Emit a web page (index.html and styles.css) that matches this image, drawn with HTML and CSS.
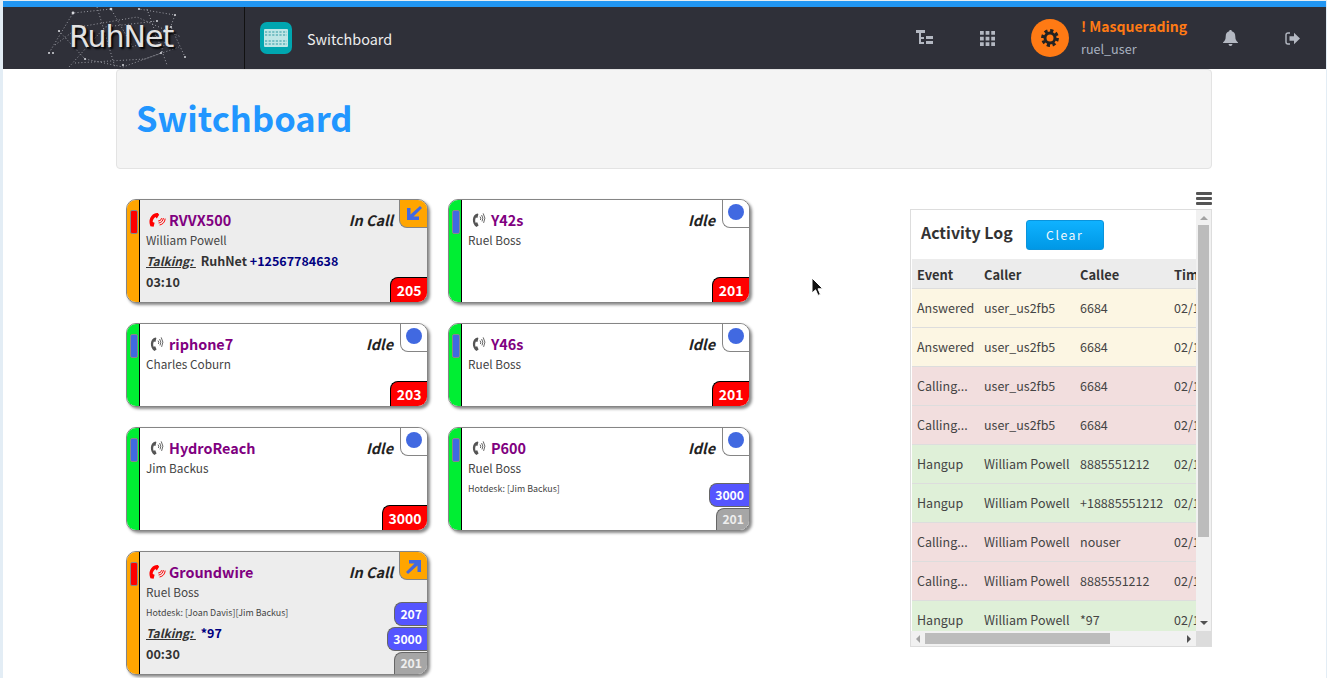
FILE: index.html
```html
<!DOCTYPE html>
<html lang="en">
<head>
  <meta charset="UTF-8" />
  <meta name="viewport" content="width=device-width, initial-scale=1.0"/>
  <title>Switchboard</title>
  <link rel="stylesheet" href="styles.css">
</head>
<body>
  <svg class="defs" width="0" height="0">
    <symbol id="phone" viewBox="0 0 16 16">
      <path d="M6.4 1.4 C1 2.4 .2 11.4 5.4 15 L7.6 13.6 L6.2 10.2 L4.6 10.8 C3.9 9 4.1 7.4 4.9 5.6 L6.4 6.1 L7.4 2 Z"/>
      <path d="M9 4.6 Q10.4 6.2 9.4 8 M10.6 3 Q12.9 6.2 11 9.4 M12.2 1.4 Q15.4 6.2 12.6 10.9" fill="none" stroke="currentColor" stroke-width=".9"/>
    </symbol>
    <symbol id="phone-call" viewBox="0 0 18 16">
      <path d="M9.8 1 C4.2 .4 -.6 7.6 2.4 14.2 L5.6 14.8 L6.6 10.8 L4.7 10 C4.7 8 5.8 6 7.4 5 L8.8 6.4 L11.2 2.8 Z"/>
      <path d="M10.2 9 Q13 9.2 13.6 6.2 M10.6 11 Q14.6 10.6 15.4 6 M11.6 13 Q16.6 12 17.2 6.6" fill="none" stroke="currentColor" stroke-width="1"/>
    </symbol>
  </svg>

  <header class="topbar">
    <div class="logo">
      <svg class="logo-net" width="150" height="62" viewBox="0 0 150 62">
        <g fill="none" stroke="#9a9ba3" stroke-width="1" stroke-dasharray="1 2.2">
          <path d="M4 46 L28 6 L66 2 L88 40 L126 20 L140 50"/>
          <path d="M14 24 L40 52 L78 60 L116 46 L130 8 L94 2"/>
          <path d="M52 0 L70 60 M102 2 L122 58 M24 60 L60 20 L112 14"/>
          <path d="M10 38 L34 20 L92 10 L136 30 M30 56 L100 52 L134 40"/>
        </g>
        <g fill="#d6d7dc">
          <circle cx="28" cy="6" r="1.4"/><circle cx="66" cy="2" r="1.3"/><circle cx="94" cy="2" r="1.1"/>
          <circle cx="126" cy="20" r="1.1"/><circle cx="14" cy="24" r="1.1"/><circle cx="4" cy="46" r="1"/>
          <circle cx="8" cy="46" r="1"/><circle cx="140" cy="50" r="1"/><circle cx="116" cy="46" r="1"/>
          <circle cx="34" cy="20" r="1.1"/><circle cx="112" cy="14" r="1"/><circle cx="40" cy="52" r="1"/>
          <circle cx="78" cy="58" r="1"/><circle cx="130" cy="8" r="1"/>
        </g>
      </svg>
      <span class="logo-text">RuhNet</span>
    </div>
    <div class="app-title">
      <span class="app-icon">
        <svg width="24" height="18" viewBox="0 0 24 18">
          <rect width="24" height="18" rx="1" fill="#bfe6e6"/>
          <g fill="none" stroke="#2f98a2" stroke-width="1.1" stroke-dasharray="2.2 1.4">
            <path d="M1 3H23M1 6H23M1 12H23M1 15H23"/>
          </g>
        </svg>
      </span>
      <span>Switchboard</span>
    </div>
    <nav class="top-right">
      <svg class="nav-icon tree" width="17" height="16" viewBox="0 0 17 16">
        <path d="M0 0H9V3H0ZM3 3H5V14H3ZM3 7H8V9H3ZM3 12H8V14H3ZM10 6H17V9H10ZM10 11H17V14H10Z"/>
      </svg>
      <svg class="nav-icon grid" width="15" height="15" viewBox="0 0 16 16">
        <path d="M0 0H4V4H0ZM6 0H10V4H6ZM12 0H16V4H12ZM0 6H4V10H0ZM6 6H10V10H6ZM12 6H16V10H12ZM0 12H4V16H0ZM6 12H10V16H6ZM12 12H16V16H12Z"/>
      </svg>
      <span class="avatar">
        <svg width="18" height="18" viewBox="0 0 18 18">
          <circle cx="9" cy="9" r="5" fill="none" stroke="#222" stroke-width="3"/>
          <circle cx="9" cy="9" r="7.4" fill="none" stroke="#222" stroke-width="3" stroke-dasharray="3.2 2.6"/>
        </svg>
      </span>
      <div class="who">
        <div class="who-alert">! Masquerading</div>
        <div class="who-name">ruel_user</div>
      </div>
      <svg class="nav-icon bell" width="15" height="16" viewBox="0 0 15 16">
        <path d="M7.5 0C8.3 0 8.8.5 8.8 1.2 11.2 1.8 12.3 3.8 12.3 6.4 12.3 9.6 13.2 10.8 15 12.4V13H0V12.4C1.8 10.8 2.7 9.6 2.7 6.4 2.7 3.8 3.8 1.8 6.2 1.2 6.2.5 6.7 0 7.5 0ZM5.6 14H9.4C9.4 15.2 8.6 16 7.5 16S5.6 15.2 5.6 14Z"/>
      </svg>
      <svg class="nav-icon signout" width="15" height="13" viewBox="0 0 15 13">
        <path d="M5 1H3C1.8 1 1 1.8 1 3V10C1 11.2 1.8 12 3 12H5" fill="none" stroke="currentColor" stroke-width="1.4"/>
        <path d="M4.5 4.2H9V.8L15 6.5 9 12.2V8.8H4.5Z"/>
      </svg>
    </nav>
  </header>

  <main class="page">
    <div class="page-head">
      <h1>Switchboard</h1>
    </div>

    <div class="board">
      <section class="cards">
        <article class="card in-call">
          <span class="strip"><i class="led red"></i></span>
          <span class="corner">
            <svg width="16" height="16" viewBox="0 0 16 16"><path d="M14 0 L16 2 L7.5 10.5 L13 10.5 L13 14 L1 14 L1 2 L4.5 2 L4.5 8.5Z"/></svg>
          </span>
          <div class="card-top">
            <svg class="ph ph-call" width="18" height="16"><use href="#phone-call"/></svg>
            <span class="dev-name">RVVX500</span>
            <span class="state">In Call</span>
          </div>
          <div class="user">William Powell</div>
          <div class="talk"><u>Talking:&nbsp;</u> <span class="peer">RuhNet</span> <span class="num">+12567784638</span></div>
          <div class="dur">03:10</div>
          <div class="badges"><span class="badge own">205</span></div>
        </article>

        <article class="card idle">
          <span class="strip"><i class="led blue"></i></span>
          <span class="corner"><i class="dot"></i></span>
          <div class="card-top">
            <svg class="ph" width="16" height="16"><use href="#phone"/></svg>
            <span class="dev-name">Y42s</span>
            <span class="state">Idle</span>
          </div>
          <div class="user">Ruel Boss</div>
          <div class="badges"><span class="badge own">201</span></div>
        </article>

        <article class="card idle">
          <span class="strip"><i class="led blue"></i></span>
          <span class="corner"><i class="dot"></i></span>
          <div class="card-top">
            <svg class="ph" width="16" height="16"><use href="#phone"/></svg>
            <span class="dev-name">riphone7</span>
            <span class="state">Idle</span>
          </div>
          <div class="user">Charles Coburn</div>
          <div class="badges"><span class="badge own">203</span></div>
        </article>

        <article class="card idle">
          <span class="strip"><i class="led blue"></i></span>
          <span class="corner"><i class="dot"></i></span>
          <div class="card-top">
            <svg class="ph" width="16" height="16"><use href="#phone"/></svg>
            <span class="dev-name">Y46s</span>
            <span class="state">Idle</span>
          </div>
          <div class="user">Ruel Boss</div>
          <div class="badges"><span class="badge own">201</span></div>
        </article>

        <article class="card idle">
          <span class="strip"><i class="led blue"></i></span>
          <span class="corner"><i class="dot"></i></span>
          <div class="card-top">
            <svg class="ph" width="16" height="16"><use href="#phone"/></svg>
            <span class="dev-name">HydroReach</span>
            <span class="state">Idle</span>
          </div>
          <div class="user">Jim Backus</div>
          <div class="badges"><span class="badge own">3000</span></div>
        </article>

        <article class="card idle tall">
          <span class="strip"><i class="led blue"></i></span>
          <span class="corner"><i class="dot"></i></span>
          <div class="card-top">
            <svg class="ph" width="16" height="16"><use href="#phone"/></svg>
            <span class="dev-name">P600</span>
            <span class="state">Idle</span>
          </div>
          <div class="user">Ruel Boss</div>
          <div class="hotdesk">Hotdesk: [Jim Backus]</div>
          <div class="badges">
            <span class="badge other">3000</span>
            <span class="badge off">201</span>
          </div>
        </article>

        <article class="card in-call">
          <span class="strip"><i class="led red"></i></span>
          <span class="corner">
            <svg width="16" height="16" viewBox="0 0 16 16"><path d="M2 16 L0 14 L8.5 5.5 L3 5.5 L3 2 L15 2 L15 14 L11.5 14 L11.5 7.5Z"/></svg>
          </span>
          <div class="card-top">
            <svg class="ph ph-call" width="18" height="16"><use href="#phone-call"/></svg>
            <span class="dev-name">Groundwire</span>
            <span class="state">In Call</span>
          </div>
          <div class="user">Ruel Boss</div>
          <div class="hotdesk">Hotdesk: [Joan Davis][Jim Backus]</div>
          <div class="talk"><u>Talking:&nbsp;</u> <span class="num">*97</span></div>
          <div class="dur">00:30</div>
          <div class="badges">
            <span class="badge other">207</span>
            <span class="badge other">3000</span>
            <span class="badge off">201</span>
          </div>
        </article>
      </section>

      <aside class="log-col">
        <div class="bars"><i></i><i></i><i></i></div>
        <div class="log">
          <div class="log-view">
            <div class="log-head">
              <h3>Activity Log</h3>
              <button class="clear">Clear</button>
            </div>
            <table>
              <thead>
                <tr><th>Event</th><th>Caller</th><th>Callee</th><th>Time</th></tr>
              </thead>
              <tbody>
                <tr class="ans"><td>Answered</td><td>user_us2fb5</td><td>6684</td><td>02/1</td></tr>
                <tr class="ans"><td>Answered</td><td>user_us2fb5</td><td>6684</td><td>02/1</td></tr>
                <tr class="calling"><td>Calling...</td><td>user_us2fb5</td><td>6684</td><td>02/1</td></tr>
                <tr class="calling"><td>Calling...</td><td>user_us2fb5</td><td>6684</td><td>02/1</td></tr>
                <tr class="hang"><td>Hangup</td><td>William Powell</td><td>8885551212</td><td>02/1</td></tr>
                <tr class="hang"><td>Hangup</td><td>William Powell</td><td>+18885551212</td><td>02/1</td></tr>
                <tr class="calling"><td>Calling...</td><td>William Powell</td><td>nouser</td><td>02/1</td></tr>
                <tr class="calling"><td>Calling...</td><td>William Powell</td><td>8885551212</td><td>02/1</td></tr>
                <tr class="hang"><td>Hangup</td><td>William Powell</td><td>*97</td><td>02/1</td></tr>
              </tbody>
            </table>
          </div>
          <div class="vbar">
            <i class="arrow up"></i>
            <div class="vtrack"><div class="vthumb"></div></div>
            <i class="arrow down"></i>
          </div>
          <div class="hbar">
            <i class="arrow left"></i>
            <div class="htrack"><div class="hthumb"></div></div>
            <i class="arrow right"></i>
          </div>
          <div class="sb-corner"></div>
        </div>
      </aside>
    </div>
  </main>

  <svg class="cursor" width="13" height="20" viewBox="0 0 13 20">
    <path d="M1 1V16L4.6 12.8 7 18.4 9.4 17.4 7 11.8H11.8Z" fill="#111" stroke="#fff" stroke-width="1"/>
  </svg>
</body>
</html>
```

FILE: styles.css
```css
* {
  box-sizing: border-box;
}

body {
  font-family: "Noto Sans CJK SC", "Open Sans", sans-serif;
  margin: 0;
  padding: 1px 1px 0 3px;
  height: 678px;
  overflow: hidden;
  background: linear-gradient(#fff, #fff) 3px 1px / calc(100% - 4px) 100% no-repeat, #e3edf5;
  color: #333;
  position: relative;
}

.defs {
  position: absolute;
}

/* top bar */
.topbar {
  display: flex;
  align-items: stretch;
  height: 68px;
  background: #2f3039;
  border-top: 6px solid #2196f3;
  color: #eee;
}

.logo {
  width: 242px;
  border-right: 1px solid #111;
  position: relative;
}

.logo-net {
  position: absolute;
  left: 42px;
  top: 0;
}

.logo-text {
  position: absolute;
  left: 66px;
  top: 5px;
  font-family: "DejaVu Sans", sans-serif;
  font-size: 30px;
  line-height: 50px;
  letter-spacing: -1px;
  color: #e2e2e2;
  text-shadow: 2px 2px 2px #000;
}

.app-title {
  display: flex;
  align-items: center;
  gap: 15px;
  padding-left: 15px;
  font-size: 14.4px;
}

.app-icon {
  width: 32px;
  height: 32px;
  border-radius: 7px;
  background: #00a6b0;
  display: flex;
  align-items: center;
  justify-content: center;
}

.app-icon svg {
  display: block;
}

.top-right {
  margin-left: auto;
  display: flex;
  align-items: center;
  color: #b4b8c2;
  padding-right: 26px;
}

.nav-icon {
  fill: #b4b8c2;
  display: block;
}

.tree { margin-right: 47px; }
.grid { margin-right: 36px; }

.avatar {
  width: 38px;
  height: 38px;
  border-radius: 50%;
  background: #ff7a14;
  display: flex;
  align-items: center;
  justify-content: center;
  margin-right: 12px;
}

.who {
  width: 142px;
}

.who-alert {
  color: #ff7a14;
  font-size: 14px;
  font-weight: 700;
  line-height: 22px;
  margin-top: -2px;
}

.who-name {
  color: #a9b2c0;
  font-size: 12.6px;
  line-height: 22px;
  margin-top: 1px;
}

.bell { margin-right: 47px; }

/* page */
.page {
  width: 1096px;
  margin-left: 113px;
}

.page-head {
  height: 100px;
  background: #f4f4f4;
  border: 1px solid #e3e3e3;
  border-radius: 4px;
  display: flex;
  align-items: center;
  padding: 0 0 4px 19px;
}

h1 {
  margin: 0;
  font-size: 34.5px;
  line-height: 44px;
  font-weight: 700;
  color: #2196ff;
}

.board {
  display: flex;
  justify-content: space-between;
  padding-left: 10px;
}

/* cards */
.cards {
  display: grid;
  grid-template-columns: 302px 302px;
  gap: 20px;
  align-items: stretch;
  align-content: start;
  padding-top: 30px;
}

.card {
  position: relative;
  min-height: 84px;
  border: 1px solid #858585;
  border-radius: 10px;
  box-shadow: 2px 2px 3px #8a8a8a;
  padding: 10px 34px 0 19px;
  background: #fff;
  overflow: hidden;
}

.card.in-call {
  background: #ededed;
  padding-bottom: 10px;
}

.card.tall {
  min-height: 104px;
}

.strip {
  position: absolute;
  left: 0;
  top: 0;
  bottom: 0;
  width: 13px;
  border-right: 1px solid #000;
}

.in-call .strip { background: #ffa500; }
.idle .strip { background: #00ee33; }

.led {
  position: absolute;
  left: 3px;
  top: 10px;
  width: 8px;
  height: 24px;
  border: 1px solid #888;
  border-radius: 2px;
}

.led.red { background: #ff0000; }
.led.blue { background: #4169e1; }

.corner {
  position: absolute;
  right: 0;
  top: 0;
  width: 28px;
  height: 28px;
  border-left: 1px solid #858585;
  border-bottom: 1px solid #858585;
  border-bottom-left-radius: 8px;
  display: flex;
  align-items: center;
  justify-content: center;
}

.in-call .corner { background: #ffa500; }
.idle .corner { background: #fff; width: 27px; }

.corner svg {
  fill: #4169e1;
}

.dot {
  width: 16px;
  height: 16px;
  border-radius: 50%;
  background: #4169e1;
  margin-top: -3px;
}

.card-top {
  display: flex;
  align-items: center;
  height: 20px;
  margin-bottom: 1px;
}

.ph {
  margin: 0 4px 0 3px;
  fill: #555;
  color: #555;
}

.ph-call {
  fill: #f00;
  color: #f00;
  margin: 0 3px 0 2px;
}

.dev-name {
  font-size: 14.4px;
  line-height: 20px;
  font-weight: 700;
  color: #800080;
}

.state {
  margin-left: auto;
  font-size: 14.4px;
  line-height: 20px;
  font-weight: 700;
  font-style: italic;
  color: #222;
}

.user {
  font-size: 11.8px;
  line-height: 18px;
  color: #444;
}

.hotdesk {
  font-size: 8.9px;
  line-height: 20px;
  color: #444;
  margin: 2px 0 -2px;
}

.talk {
  font-size: 12.5px;
  line-height: 21px;
  font-weight: 700;
  color: #333;
  margin-top: 1px;
}

.talk u {
  font-style: italic;
  font-size: 12px;
  margin-right: 2px;
}

.num { color: #000080; }

.dur {
  font-size: 12.6px;
  line-height: 21px;
  font-weight: 700;
  color: #333;
}

.badges {
  position: absolute;
  right: 0;
  bottom: 0;
  display: flex;
  flex-direction: column;
  align-items: flex-end;
  gap: 1px;
}

.badge {
  font-size: 12.2px;
  font-weight: 700;
  color: #fff;
  padding: 0 5px;
  border-radius: 8px 0 0 8px;
  border: 1px solid #666;
  border-right: 0;
  line-height: 22px;
}

.badge.own {
  font-size: 14px;
  padding: 0 5.5px;
  background: #f00;
  border: 0;
  border-top: 1px solid #000;
  border-left: 1px solid #000;
  border-radius: 8px 0 0 0;
  line-height: 24px;
}

.badge.other { background: #5555ff; }

.badge.off {
  background: #a6a6a6;
  color: #eee;
  border-bottom: 0;
  border-radius: 8px 0 0 0;
  line-height: 21px;
}

/* activity log */
.log-col {
  width: 302px;
  padding-top: 23px;
}

.bars {
  width: 16px;
  margin: 0 0 1px auto;
  height: 16px;
  display: flex;
  flex-direction: column;
  gap: 2px;
}

.bars i {
  display: block;
  height: 3px;
  background: #555;
  border-radius: 1px;
}

.log {
  height: 438px;
  border: 1px solid #ddd;
  display: grid;
  grid-template-columns: 285px 15px;
  grid-template-rows: 421px 15px;
}

.log-view {
  overflow: hidden;
}

.log-head {
  height: 49px;
  display: flex;
  align-items: center;
  gap: 13px;
  padding-left: 10px;
  padding-top: 1px;
}

h3 {
  margin: 0;
  font-size: 15.9px;
  line-height: 24px;
  font-weight: 700;
  color: #333;
  position: relative;
  top: -2px;
}

.clear {
  width: 78px;
  height: 30px;
  border: 1px solid #0a94dc;
  border-radius: 3px;
  background: linear-gradient(#0fb2ff, #0098e6);
  color: #f2f8fc;
  font-family: inherit;
  font-size: 12.3px;
  letter-spacing: 1.5px;
  padding: 0;
}

table {
  border-collapse: collapse;
  table-layout: fixed;
  width: 350px;
  margin-left: 1px;
  font-size: 12.5px;
}

th, td {
  text-align: left;
  padding: 0 0 0 5px;
  border-bottom: 1px solid #ddd;
  white-space: nowrap;
  overflow: hidden;
}

th:nth-child(1) { width: 67px; }
th:nth-child(2) { width: 96px; }
th:nth-child(3) { width: 94px; }

th {
  height: 29px;
  padding-top: 2px;
  background: #ececec;
  font-size: 12.9px;
  font-weight: 700;
  color: #333;
}

td {
  height: 39px;
  color: #444;
}

.ans { background: #fcf6e3; }
.calling { background: #f2dede; }
.hang { background: #dff0d8; }

.vbar, .hbar {
  background: #f1f1f1;
  display: flex;
  align-items: center;
}

.vbar {
  flex-direction: column;
}

.vtrack {
  flex: 1;
  width: 100%;
  padding: 0 2px;
}

.vthumb {
  height: 312px;
  background: #bcbcbc;
}

.htrack {
  flex: 1;
  height: 100%;
  padding: 2px 0;
}

.hthumb {
  width: 185px;
  height: 100%;
  background: #bcbcbc;
}

.sb-corner {
  background: #dcdcdc;
}

.arrow {
  flex: none;
  width: 0;
  height: 0;
  margin: 5px;
  border: 4px solid transparent;
}

.arrow.up { border-top: 0; border-bottom-color: #a3a3a3; margin: 6px 0 5px; }
.arrow.down { border-bottom: 0; border-top-color: #505050; margin: 5px 0 6px; }
.arrow.left { border-left: 0; border-right-color: #a3a3a3; }
.arrow.right { border-right: 0; border-left-color: #505050; }

.cursor {
  position: absolute;
  left: 811px;
  top: 277px;
}
```
